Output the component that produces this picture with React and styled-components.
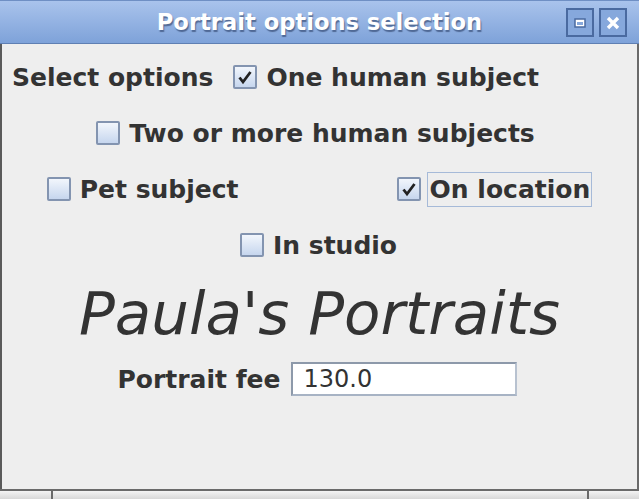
import React from 'react';
import styled, {createGlobalStyle} from 'styled-components';

const GlobalStyle = createGlobalStyle`
    html, body {
        margin: 0;
        padding: 0;
        background: #eeeeee;
    }
    * {
        box-sizing: border-box;
    }
`;

const Frame = styled.div`
    width: 639px;
    height: 499px;
    display: flex;
    flex-direction: column;
    background: #eeeeee;
    font-family: 'DejaVu Sans', 'Liberation Sans', sans-serif;
    color: #333333;
    overflow: hidden;
`;

const TitleBar = styled.div`
    height: 44px;
    flex: none;
    display: flex;
    align-items: center;
    justify-content: center;
    position: relative;
    background: linear-gradient(#a9c3ec, #7ea2d9);
    border-top: 1px solid #6f8fc4;
    border-bottom: 1px solid #5f7fb3;
`;

const TitleText = styled.div`
    font-weight: bold;
    font-size: 22.6px;
    color: #ffffff;
    text-shadow: 1px 2px 1px rgba(40, 60, 100, 0.6);
`;

const TitleButtons = styled.div`
    position: absolute;
    right: 12px;
    top: 7px;
    display: flex;
    gap: 5px;
`;

const TitleButton = styled.div`
    width: 28px;
    height: 29px;
    border: 2px solid #4a6aa0;
    background: #86a8dc;
    display: flex;
    align-items: center;
    justify-content: center;
`;

const Body = styled.div`
    flex: 1;
    display: flex;
    flex-direction: column;
    align-items: center;
    gap: 20px;
    padding-top: 15px;
    border-left: 2px solid #5a5a5a;
    border-right: 2px solid #6a6a6a;
`;

const Row = styled.div`
    height: 36px;
    display: flex;
    align-items: center;
    justify-content: center;
    gap: ${(p) => p.gap || 0}px;
    margin-left: ${(p) => p.shift || 0}px;
`;

const Label = styled.span`
    font-weight: bold;
    font-size: 25px;
    line-height: 1;
    white-space: nowrap;
`;

const CheckItem = styled.label`
    display: flex;
    align-items: center;
    gap: 6px;
`;

const Box = styled.span`
    width: 24px;
    height: 24px;
    flex: none;
    border: 2px solid #8394b0;
    border-radius: 2px;
    background: linear-gradient(#f2f6fc, #c6d6ee);
    display: flex;
    align-items: center;
    justify-content: center;
`;

const ItemText = styled.span`
    font-weight: bold;
    font-size: 25px;
    line-height: 1;
    white-space: nowrap;
    padding: 4px 1px 4px 2px;
    border: 1px solid ${(p) => (p.focused ? '#a6bad8' : 'transparent')};
`;

const Brand = styled.div`
    height: 58px;
    display: flex;
    align-items: center;
    font-style: italic;
    font-size: 59.5px;
    line-height: 1;
    color: #333333;
    margin-top: 2px;
    margin-bottom: -2px;
`;

const FeeRow = styled.div`
    height: 36px;
    display: flex;
    align-items: center;
    gap: 10px;
    margin-left: -5px;
`;

const Field = styled.div`
    width: 226px;
    height: 34px;
    background: #ffffff;
    border: 2px solid #8d99aa;
    border-right-color: #b8c2d0;
    border-bottom-color: #a7b3c4;
    padding-left: 11px;
    font-size: 24px;
    line-height: 30px;
    color: #333333;
`;

const BottomBar = styled.div`
    height: 10px;
    flex: none;
    display: flex;
    border-top: 2px solid #6a6a6a;
    background: #6a6a6a;
    gap: 2px;
`;

const BottomSegment = styled.div`
    width: ${(p) => (p.w ? `${p.w}px` : 'auto')};
    flex: ${(p) => (p.w ? 'none' : 1)};
    background: linear-gradient(#f4f4f4, #d8d8d8);
`;

const Check = () => (
    <svg width="16" height="16" viewBox="0 0 16 16">
        <path d="M2.5 8.5 L6 13 L13.5 3" fill="none" stroke="#222" strokeWidth="2.8" strokeLinejoin="miter" />
    </svg>
);

const CheckBox = ({checked, focused, children}) => (
    <CheckItem>
        <Box>{checked && <Check />}</Box>
        <ItemText focused={focused}>{children}</ItemText>
    </CheckItem>
);

export default function App() {
    return (
        <Frame>
            <GlobalStyle />
            <TitleBar>
                <TitleText>Portrait options selection</TitleText>
                <TitleButtons>
                    <TitleButton>
                        <svg width="12" height="10" viewBox="0 0 12 10">
                            <rect x="1" y="1" width="10" height="8" fill="#ffffff" stroke="#4a6aa0" strokeWidth="1.5" />
                            <rect x="3" y="4" width="6" height="3" fill="#86a8dc" />
                        </svg>
                    </TitleButton>
                    <TitleButton>
                        <svg width="14" height="14" viewBox="0 0 14 14">
                            <path d="M2 2 L12 12 M12 2 L2 12" stroke="#ffffff" strokeWidth="3.4" />
                        </svg>
                    </TitleButton>
                </TitleButtons>
            </TitleBar>
            <Body>
                <Row gap={20} shift={-86}>
                    <Label>Select options</Label>
                    <CheckBox checked>One human subject</CheckBox>
                </Row>
                <Row shift={-6}>
                    <CheckBox>Two or more human subjects</CheckBox>
                </Row>
                <Row gap={156}>
                    <CheckBox>Pet subject</CheckBox>
                    <CheckBox checked focused>On location</CheckBox>
                </Row>
                <Row>
                    <CheckBox>In studio</CheckBox>
                </Row>
                <Brand>Paula's Portraits</Brand>
                <FeeRow>
                    <Label>Portrait fee</Label>
                    <Field>130.0</Field>
                </FeeRow>
            </Body>
            <BottomBar>
                <BottomSegment w={51} />
                <BottomSegment />
                <BottomSegment w={50} />
            </BottomBar>
        </Frame>
    );
}
